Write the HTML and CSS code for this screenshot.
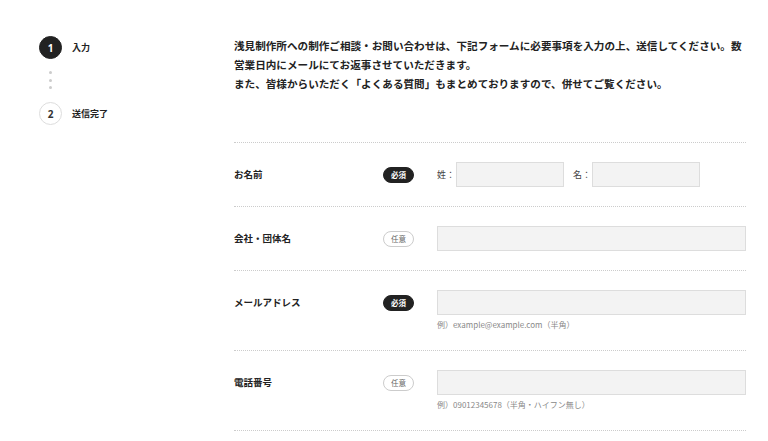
FILE: index.html
```html
<html>
<head>
<meta charset="UTF-8">
<title>お問い合わせ - 浅見制作所</title>
<link rel="stylesheet" href="styles.css">
</head>
<body>
<div class="page">
    <div class="steps">
        <div class="step active">
            <span class="num">1</span><span class="label">入力</span>
        </div>
        <div class="dots">
            <span></span><span></span><span></span>
        </div>
        <div class="step">
            <span class="num">2</span><span class="label">送信完了</span>
        </div>
    </div>

    <div class="content">
        <p class="intro">浅見制作所への制作ご相談・お問い合わせは、下記フォームに必要事項を入力の上、送信してください。数営業日内にメールにてお返事させていただきます。<br>また、皆様からいただく「よくある質問」もまとめておりますので、併せてご覧ください。</p>

        <div class="form">
            <div class="row">
                <div class="name">お名前</div>
                <div class="req"><span class="badge must">必須</span></div>
                <div class="field split">
                    <span class="pre">姓：</span><input type="text" class="half">
                    <span class="pre second">名：</span><input type="text" class="half">
                </div>
            </div>
            <div class="row">
                <div class="name">会社・団体名</div>
                <div class="req"><span class="badge">任意</span></div>
                <div class="field"><input type="text"></div>
            </div>
            <div class="row">
                <div class="name">メールアドレス</div>
                <div class="req"><span class="badge must">必須</span></div>
                <div class="field">
                    <input type="text">
                    <div class="hint">例）example@example.com（半角）</div>
                </div>
            </div>
            <div class="row">
                <div class="name">電話番号</div>
                <div class="req"><span class="badge">任意</span></div>
                <div class="field">
                    <input type="text">
                    <div class="hint">例）09012345678（半角・ハイフン無し）</div>
                </div>
            </div>
        </div>
    </div>
</div>
</body>
</html>
```

FILE: styles.css
```css
body {
    margin: 0;
    font-family: "Noto Sans CJK JP", "Noto Sans", sans-serif;
    color: #222;
    background: #fff;
}

* {
    box-sizing: border-box;
}

.page {
    display: flex;
    padding: 36px 0 0 39px;
}

.steps {
    width: 195px;
    flex: 0 0 195px;
}

.steps .step {
    display: flex;
    align-items: center;
}

.steps .num {
    width: 23px;
    height: 23px;
    border-radius: 50%;
    border: 1px solid #ddd;
    display: flex;
    align-items: center;
    justify-content: center;
    font-size: 10px;
    font-weight: bold;
    color: #333;
    font-family: "Open Sans", sans-serif;
}

.steps .step.active .num {
    background: #222;
    border-color: #222;
    color: #fff;
}

.steps .label {
    margin-left: 10px;
    font-size: 9px;
    font-weight: bold;
}

.steps .dots {
    display: flex;
    flex-direction: column;
    align-items: center;
    width: 23px;
    padding: 10px 0 11px;
}

.steps .dots span {
    width: 3px;
    height: 3px;
    border-radius: 50%;
    background: #ccc;
    margin: 2px 0;
}

.steps .dots span + span {
    margin-top: 2.5px;
}

.content {
    width: 512px;
}

.intro {
    margin: 0;
    font-size: 10.6px;
    font-weight: bold;
    line-height: 19px;
    color: #222;
}

.form {
    margin-top: 49px;
    border-top: 1px dotted #ccc;
}

.row {
    display: flex;
    align-items: flex-start;
    padding: 19px 0;
    border-bottom: 1px dotted #ccc;
}

.row .name {
    width: 149px;
    height: 25px;
    font-size: 9.5px;
    font-weight: bold;
    line-height: 25px;
}

.row .req {
    width: 54px;
    height: 25px;
    display: flex;
    align-items: center;
}

.badge {
    display: inline-block;
    width: 31px;
    height: 16px;
    line-height: 14px;
    border-radius: 8px;
    border: 1px solid #ccc;
    text-align: center;
    font-size: 7.5px;
    color: #666;
    background: #fff;
}

.badge.must {
    background: #222;
    border-color: #222;
    color: #fff;
    font-weight: bold;
}

.row .field {
    flex: 1;
}

.row .field.split {
    display: flex;
    align-items: center;
    height: 25px;
}

.row .field .pre {
    font-size: 9px;
    line-height: 12px;
    color: #444;
    width: 19px;
}

.row .field .pre.second {
    margin-left: 9px;
}

.row input {
    display: block;
    width: 100%;
    height: 25px;
    border: 1px solid #ddd;
    background: #f3f3f3;
    margin: 0;
    padding: 0 8px;
}

.row input.half {
    width: 108px;
}

.hint {
    margin-top: 3px;
    font-size: 8px;
    line-height: 13px;
    color: #888;
}
```
